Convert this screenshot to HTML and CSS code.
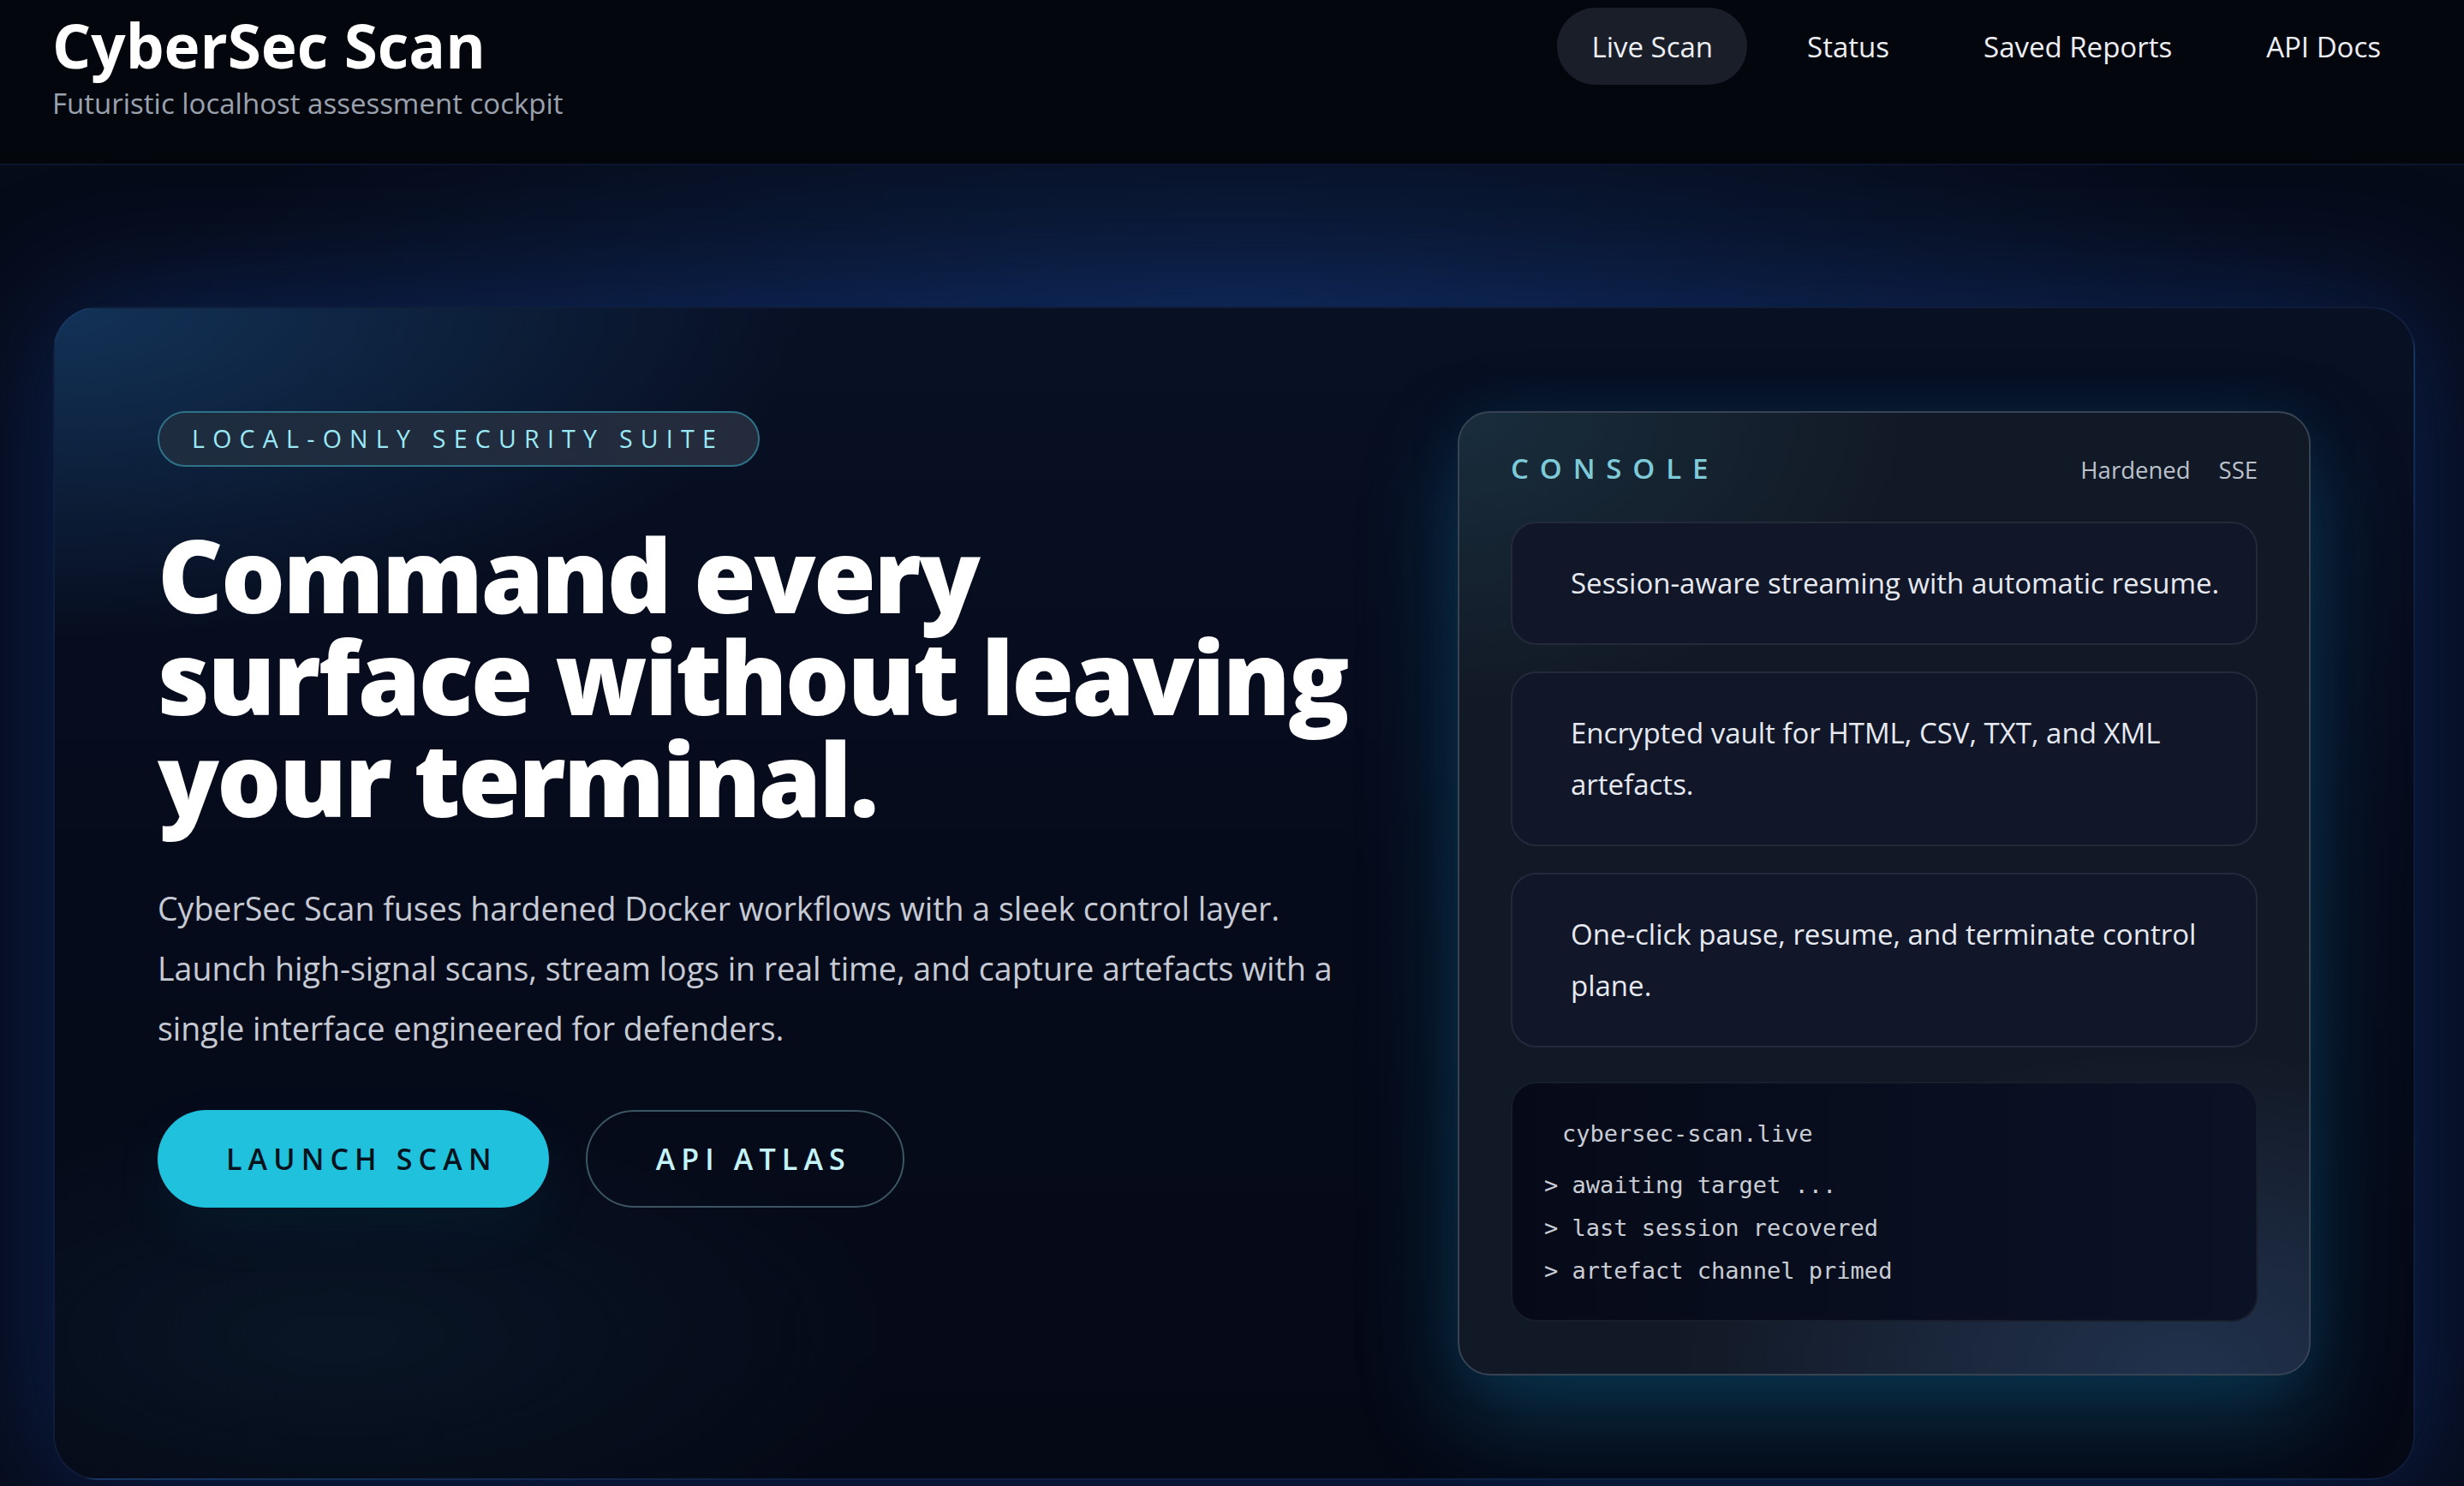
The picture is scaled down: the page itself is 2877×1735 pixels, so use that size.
FILE: index.html
```html
<!DOCTYPE html>
<html lang="en">
<head>
<meta charset="utf-8">
<title>CyberSec Scan</title>
<link rel="stylesheet" href="styles.css">
</head>
<body>
<header class="topbar">
  <div class="brand">
    <h1 class="brand-title">CyberSec Scan</h1>
    <p class="brand-sub">Futuristic localhost assessment cockpit</p>
  </div>
  <nav class="nav">
    <a class="nav-link is-active" href="#">Live Scan</a>
    <a class="nav-link" href="#">Status</a>
    <a class="nav-link" href="#">Saved Reports</a>
    <a class="nav-link" href="#">API Docs</a>
  </nav>
</header>
<main class="hero-wrap">
  <section class="hero-card">
    <div class="hero-copy">
      <span class="badge">LOCAL-ONLY SECURITY SUITE</span>
      <h2 class="headline">Command every surface without leaving your terminal.</h2>
      <p class="lede">CyberSec Scan fuses hardened Docker workflows with a sleek control layer. Launch high-signal scans, stream logs in real time, and capture artefacts with a single interface engineered for defenders.</p>
      <div class="actions">
        <a class="btn btn-primary" href="#">LAUNCH SCAN</a>
        <a class="btn btn-ghost" href="#">API ATLAS</a>
      </div>
    </div>
    <aside class="console">
      <div class="console-head">
        <span class="console-title">CONSOLE</span>
        <div class="console-tags"><span>Hardened</span><span>SSE</span></div>
      </div>
      <ul class="features">
        <li class="feature">Session-aware streaming with automatic resume.</li>
        <li class="feature">Encrypted vault for HTML, CSV, TXT, and XML artefacts.</li>
        <li class="feature">One-click pause, resume, and terminate control plane.</li>
      </ul>
      <div class="terminal">
        <div class="terminal-title">cybersec-scan.live</div>
        <ul class="terminal-lines">
          <li>&gt; awaiting target ...</li>
          <li>&gt; last session recovered</li>
          <li>&gt; artefact channel primed</li>
        </ul>
      </div>
    </aside>
  </section>
</main>
</body>
</html>
```

FILE: styles.css
```css
* { box-sizing: border-box; }

html, body {
  margin: 0;
  padding: 0;
}

body {
  background: #04070f;
  color: #e8ebf0;
  font-family: "Open Sans", "Noto Sans", "DejaVu Sans", sans-serif;
  overflow: hidden;
}

a { text-decoration: none; color: inherit; }

/* ---------- top bar ---------- */
.topbar {
  display: flex;
  justify-content: space-between;
  align-items: flex-start;
  height: 193px;
  padding: 9px 57px 0 61px;
  background: #04060e;
  border-bottom: 2px solid #0c1630;
}

.brand { padding-top: 8px; }

.brand-title {
  margin: 0;
  font-size: 71px;
  line-height: 72px;
  font-weight: 700;
  color: #ffffff;
}

.brand-sub {
  margin: 12px 0 0;
  font-size: 33px;
  line-height: 39.6px;
  color: #9aa2ae;
}

.nav {
  display: flex;
  gap: 30px;
}

.nav-link {
  display: block;
  padding: 26px 40px 24px;
  font-size: 33px;
  line-height: 40px;
  color: #eceef3;
  border-radius: 999px;
}

.nav-link.is-active { background: #1a1e29; }

/* ---------- hero ---------- */
.hero-wrap {
  padding: 165px 57px 60px 62px;
  background:
    radial-gradient(ellipse 60% 30% at 50% 12%, rgba(18, 48, 100, 0.55), transparent 75%),
    #060b19;
}

.hero-card {
  display: grid;
  grid-template-columns: minmax(0, 1fr) 996px;
  column-gap: 100px;
  align-items: start;
  padding: 120px;
  border: 2px solid rgba(34, 64, 118, 0.35);
  border-radius: 52px;
  background:
    radial-gradient(ellipse 40% 35% at 0% 0%, rgba(22, 62, 104, 0.75), transparent 80%),
    radial-gradient(ellipse 30% 25% at 12% 88%, rgba(16, 48, 70, 0.3), transparent 80%),
    linear-gradient(180deg, #081024 0%, #060b1b 50%, #050916 100%);
  box-shadow: 0 0 150px 10px rgba(22, 62, 150, 0.42);
}

.hero-copy {
  display: flex;
  flex-direction: column;
  align-items: flex-start;
}

.badge {
  display: inline-block;
  padding: 14px 40px 14px 38px;
  font-size: 28.5px;
  line-height: 33px;
  font-weight: 500;
  letter-spacing: 0.325em;
  color: #9be9f5;
  border: 2px solid #2f7187;
  border-radius: 999px;
  background: linear-gradient(90deg, #1d2c3f, #242b3c);
}

.headline {
  margin: 66px 0 0;
  font-size: 118px;
  line-height: 119px;
  font-weight: 800;
  color: #ffffff;
  letter-spacing: -0.022em;
}

.lede {
  margin: 58px 0 0;
  font-size: 37.5px;
  line-height: 70px;
  color: #c6cad4;
}

.actions {
  display: flex;
  gap: 43px;
  margin-top: 60px;
}

.btn {
  display: inline-flex;
  align-items: center;
  height: 114px;
  padding: 0 60px 0 80px;
  font-size: 34px;
  font-weight: 600;
  letter-spacing: 0.21em;
  border-radius: 999px;
}

.btn-primary {
  background: #20c1dc;
  color: #06121c;
  box-shadow: 0 24px 70px rgba(32, 193, 220, 0.06);
}

.btn-ghost {
  border: 2px solid #3b5662;
  color: #c5f3fa;
}

/* ---------- console ---------- */
.console {
  padding: 45px 60px 61px;
  border: 2px solid #374253;
  border-radius: 38px;
  background:
    radial-gradient(ellipse 70% 40% at 0% 0%, rgba(30, 62, 78, 0.55), transparent 75%),
    radial-gradient(ellipse 80% 45% at 85% 100%, rgba(38, 58, 90, 0.75), transparent 75%),
    #121926;
  box-shadow: 0 50px 110px rgba(18, 110, 150, 0.4), 0 0 60px rgba(18, 90, 130, 0.12);
}

.console-head {
  display: flex;
  justify-content: space-between;
  align-items: baseline;
  margin-bottom: 42px;
}

.console-title {
  font-size: 33px;
  line-height: 40px;
  font-weight: 600;
  letter-spacing: 0.39em;
  color: #7ecad8;
}

.console-tags {
  display: flex;
  gap: 33px;
  font-size: 27.5px;
  color: #bcc2cc;
}

.features {
  list-style: none;
  margin: 0;
  padding: 0;
  display: flex;
  flex-direction: column;
  gap: 31px;
}

.feature {
  padding: 40px 28px 40px 68px;
  font-size: 33px;
  line-height: 60px;
  color: #e6e9f0;
  background: #111729;
  border: 2px solid #232a3a;
  border-radius: 30px;
}

.terminal {
  margin-top: 40px;
  padding: 34px 40px 32px 37px;
  border: 2px solid #171d2b;
  border-radius: 30px;
  background: linear-gradient(90deg, #060a18, #0b1226);
  font-family: "DejaVu Sans Mono", "Liberation Mono", monospace;
  font-size: 27px;
  line-height: 50px;
  color: #c9cdd5;
}

.terminal-title {
  padding-left: 21px;
  margin-bottom: 10px;
}

.terminal-lines {
  list-style: none;
  margin: 0;
  padding: 0;
}

.terminal-lines li { white-space: pre; }
```
